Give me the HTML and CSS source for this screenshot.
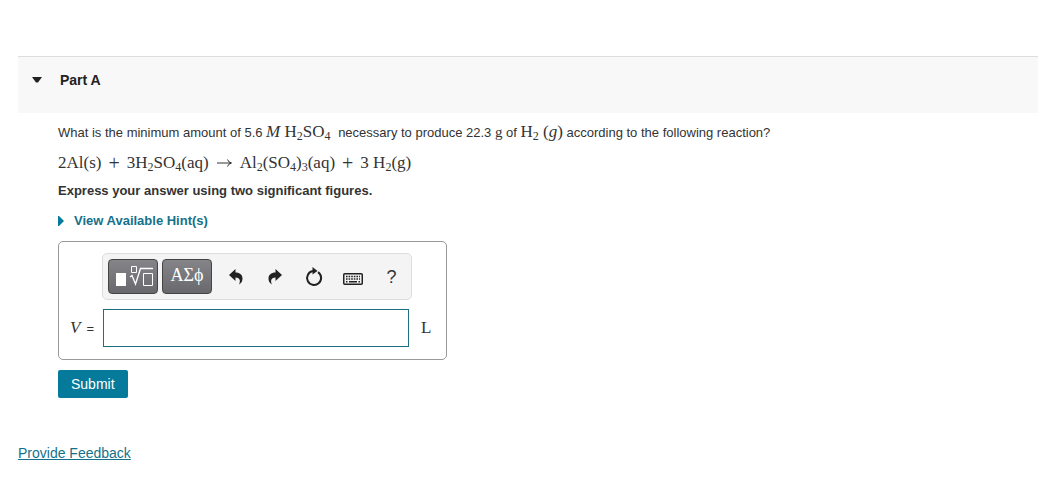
FILE: index.html
```html
<!DOCTYPE html>
<html lang="en">
<head>
<meta charset="utf-8">
<title>Part A</title>
<link rel="stylesheet" href="styles.css">
</head>
<body>
<main class="page">
  <header class="part-header">
    <button class="collapse" type="button" aria-label="Collapse Part A"><svg width="10" height="6" viewBox="0 0 10 6"><path d="M0 0h10L6 5.500H4z"/></svg></button>
    <h1 class="part-title">Part A</h1>
  </header>
  <section class="part-body">
    <p class="question">What is the minimum amount of 5.6 <span class="math lead"><i>M</i> H<sub>2</sub>SO<sub>4</sub></span> necessary to produce 22.3 <span class="math unit-g">g</span> of <span class="math">H<sub>2</sub> (<i>g</i>)</span> according to the following reaction?</p>
    <p class="equation math"><span>2Al(s)</span><span class="op">+</span><span>3H<sub>2</sub>SO<sub>4</sub>(aq)</span><svg class="arrow" width="15" height="10" viewBox="0 0 15 10"><path d="M0 5h14M10.500 1.500Q11.500 4.500 14.500 5Q11.500 5.500 10.500 8.500"/></svg><span>Al<sub>2</sub>(SO<sub>4</sub>)<sub>3</sub>(aq)</span><span class="op">+</span><span>3 H<sub>2</sub>(g)</span></p>
    <p class="instruction">Express your answer using two significant figures.</p>
    <button class="hints" type="button"><svg width="6" height="10" viewBox="0 0 6 10"><path d="M0 0h1L6 5L1 10H0z"/></svg>View Available Hint(s)</button>
    <form class="answer">
      <div class="answer-box">
        <div class="toolbar" role="toolbar" aria-label="Equation editor">
          <button class="palette" type="button" aria-label="Templates"><svg width="40" height="24" viewBox="0 0 40 24"><path fill="#fff" d="M3 8h10v13H3z"/><g fill="none" stroke="#fff"><path d="M18.500 1.500h5v6h-5z"/><path d="M30.500 8.500h9v12h-9z"/><path stroke-width="1.300" d="M17 12l2-1.500L22.500 19L27.500 3.500H40"/></g></svg></button>
          <button class="palette greek" type="button">ΑΣϕ</button>
          <button class="tool" type="button" aria-label="Undo"><svg width="14" height="16" viewBox="0 0 14 16"><path d="M0 6L6.500 0V3.500C11 3.500 13.500 6 13.500 9.500C13.500 12 12.500 14 10 15.500C11.500 12.500 11.500 8.500 6.500 8.500V12z"/></svg></button>
          <button class="tool" type="button" aria-label="Redo"><svg width="14" height="16" viewBox="0 0 14 16"><path d="M14 6L7.500 0V3.500C3 3.500.5 6 .5 9.500C.5 12 1.500 14 4 15.500C2.500 12.500 2.500 8.500 7.500 8.500V12z"/></svg></button>
          <button class="tool" type="button" aria-label="Reset"><svg width="18" height="20" viewBox="0 0 18 20"><path fill="none" stroke="#222" stroke-width="2" d="M13 5.200A7 7 0 1 1 8 4.100"/><path d="M7.500 0L12.500 4L7.500 7.500z"/></svg></button>
          <button class="tool" type="button" aria-label="Keyboard shortcuts"><svg class="keyboard" width="20" height="12" viewBox="0 0 20 12"><rect x=".75" y=".75" width="18.500" height="10.500" rx="1" fill="none" stroke="#222" stroke-width="1.500"/><path fill="none" stroke="#222" stroke-width="1.500" d="M3 3.500h14M3 6h14" stroke-dasharray="1.600 1"/><path fill="none" stroke="#222" stroke-width="1.500" d="M3 8.750h1.500M6 8.750h8M15.500 8.750H17"/></svg></button>
          <button class="tool help" type="button">?</button>
        </div>
        <label class="variable" for="volume"><i class="math">V</i><span>=</span></label>
        <input class="field" id="volume" type="text" autocomplete="off">
        <span class="unit math">L</span>
      </div>
      <button class="submit" type="button">Submit</button>
    </form>
  </section>
  <footer class="footer"><a href="#feedback">Provide Feedback</a></footer>
</main>
</body>
</html>
```
FILE: styles.css
```css
* {
  box-sizing: border-box;
}

body {
  margin: 0;
  background: #fff;
  color: #333;
  font: 13px/20px "Liberation Sans", Arial, sans-serif;
}

button {
  padding: 0;
  border: 0;
  background: none;
  color: inherit;
  font: inherit;
  cursor: pointer;
}

svg {
  display: block;
}

p {
  margin: 0;
}

.page {
  padding: 56px 0 0 18px;
}

.part-header {
  display: flex;
  gap: 18px;
  padding: 13px 14px 23px;
  border-top: 1px solid #ddd;
  background: #f8f8f8;
}

.collapse {
  fill: #222;
}

.part-title {
  margin: 0;
  color: #222;
  font-size: 14px;
  line-height: 20px;
}

.part-body {
  padding: 7px 16px 0 40px;
}

.math {
  font-family: "Liberation Serif", "Times New Roman", serif;
  font-size: 17px;
}

.math sub {
  font-size: 12px;
  line-height: 0;
  vertical-align: -3px;
}

.question {
  line-height: 24px;
}

.lead {
  margin-right: 4px;
}

.unit-g {
  font-size: 15px;
}

.equation {
  display: flex;
  align-items: center;
  gap: 7px;
  padding: 6px 0;
  line-height: 24px;
}

.op {
  font-size: 20px;
}

.arrow {
  margin: 0 1px;
  fill: none;
  stroke: #333;
}

.instruction {
  font-weight: bold;
}

.hints {
  display: flex;
  align-items: center;
  gap: 10px;
  margin-top: 10px;
  color: #15718b;
  font-weight: bold;
  fill: #057a9b;
}

.answer {
  margin-top: 10px;
}

.answer-box {
  display: grid;
  grid-template-columns: 24px 306px auto;
  align-items: center;
  justify-content: start;
  column-gap: 9px;
  row-gap: 9px;
  width: fit-content;
  padding: 11px 15px 12px 11px;
  border: 1px solid #999;
  border-radius: 5px;
}

.toolbar {
  display: flex;
  grid-column: 2 / 4;
  align-items: center;
  gap: 4px;
  width: 310px;
  margin-left: -1px;
  padding: 5px;
  padding-right: 2px;
  border: 1px solid #ddd;
  border-radius: 5px;
  background: #f4f4f4;
}

.palette {
  display: flex;
  align-items: center;
  justify-content: center;
  width: 50px;
  height: 35px;
  border: 1px solid #444;
  border-radius: 4px;
  background: linear-gradient(#858589, #69696d);
  color: #fff;
}

.greek {
  padding-bottom: 4px;
  font-family: "Liberation Serif", "Times New Roman", serif;
  font-size: 18px;
}

.greek + .tool {
  margin-left: 2px;
}

.tool {
  display: flex;
  flex: 1;
  align-items: center;
  justify-content: center;
  height: 35px;
  color: #333;
  fill: #222;
}

.keyboard {
  margin-top: 4px;
}

.help {
  font-size: 18px;
}

.variable {
  display: flex;
  align-items: baseline;
  gap: 6px;
}

.field {
  width: 100%;
  height: 38px;
  padding: 0 8px;
  border: 1px solid #206e85;
  background: #fff;
  font: inherit;
}

.unit {
  padding-left: 3px;
}

.submit {
  display: block;
  margin-top: 10px;
  padding: 4px 13px;
  border-radius: 2px;
  background: #057a9b;
  color: #fff;
  font-size: 14px;
}

.footer {
  padding: 45px 0 20px;
  font-size: 14px;
}

.footer a {
  color: #15718b;
}
```
